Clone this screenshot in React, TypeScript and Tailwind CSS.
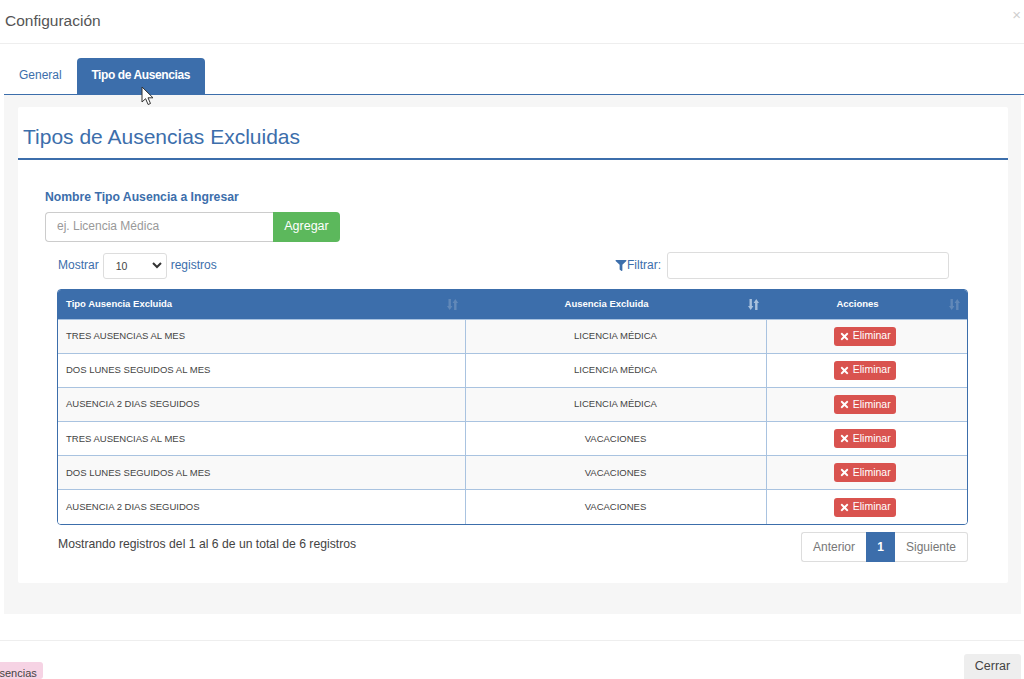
import { FaFilter, FaTimes } from 'react-icons/fa';

const rows = [
  ['TRES AUSENCIAS AL MES', 'LICENCIA MÉDICA'],
  ['DOS LUNES SEGUIDOS AL MES', 'LICENCIA MÉDICA'],
  ['AUSENCIA 2 DIAS SEGUIDOS', 'LICENCIA MÉDICA'],
  ['TRES AUSENCIAS AL MES', 'VACACIONES'],
  ['DOS LUNES SEGUIDOS AL MES', 'VACACIONES'],
  ['AUSENCIA 2 DIAS SEGUIDOS', 'VACACIONES'],
];

function SortIcon({ active }: { active?: boolean }) {
  return (
    <svg width="11" height="11" viewBox="0 0 11 11" className={active ? 'text-[#a9c1dd]' : 'text-[#6188b8]'} fill="currentColor">
      <path d="M1.5 0h2.4v7H5.4L2.7 11 0 7h1.5z" />
      <path d="M7.1 11h2.4V4H11L8.3 0 5.6 4h1.5z" />
    </svg>
  );
}

function Cursor() {
  return (
    <svg width="14" height="20" viewBox="0 0 14 20" className="absolute left-[141px] top-[86px]">
      <path d="M1 1v15l3.6-3.3 2.5 5.8 2.4-1-2.5-5.7h5z" fill="#fff" stroke="#333" strokeWidth="1" />
    </svg>
  );
}

export default function App() {
  return (
    <div className="relative w-[1024px] h-[679px] overflow-hidden bg-white font-['Liberation_Sans',Arial,sans-serif] text-[#444]">
      {/* header */}
      <div className="h-[44px] border-b border-[#eeeeee] flex items-center justify-between pl-[5px] pr-[3px]">
        <h1 className="text-[15.5px] text-[#555] -mt-[2px]">Configuración</h1>
        <span className="text-[15px] leading-none text-[#cfcfcf] -mt-[14px]">×</span>
      </div>

      {/* tabs */}
      <div className="ml-[4px] mt-[14px] h-[37px] border-b border-[#3c6eab] flex items-end pl-[15px] gap-[15px] text-[12px]">
        <span className="text-[#3c6eab] h-[36px] leading-[34px]">General</span>
        <span className="bg-[#3c6eab] text-white h-[36px] leading-[34px] w-[128px] text-center rounded-t-[4px] font-bold tracking-[-0.4px]">Tipo de Ausencias</span>
      </div>
      <Cursor />

      {/* body */}
      <div className="ml-[4px] mr-[3px] h-[519px] bg-[#f6f6f6] pt-[12px] pl-[14px] pr-[13px]">
        <div className="bg-white h-[476px] rounded-[2px] pt-[15px]">
          <h2 className="h-[38px] border-b-2 border-[#3c6eab] pl-[5px] text-[21px] leading-[30px] text-[#3c6eab]">Tipos de Ausencias Excluidas</h2>

          <div className="pl-[27px] pt-[29px]">
            <div className="text-[12.2px] leading-[16px] font-bold text-[#3c6eab]">Nombre Tipo Ausencia a Ingresar</div>
            <div className="mt-[7px] flex w-[295px] h-[30px]">
              <input
                placeholder="ej. Licencia Médica"
                className="w-[228px] border border-[#ccc] border-r-0 rounded-l-[4px] pl-[11px] pb-[2px] text-[12px] placeholder:text-[#999] outline-none"
              />
              <button className="flex-1 bg-[#5cb85c] text-white text-[12.5px] rounded-r-[4px] pb-[2px]">Agregar</button>
            </div>
          </div>

          <div className="ml-[39px] mr-[40px] mt-[9px]">
            <div className="flex items-center justify-between h-[28px] pl-[1px] pr-[19px]">
              <div className="flex items-center text-[12px] text-[#3c6eab]">
                <span>Mostrar</span>
                <div className="mx-[4px] w-[64px] h-[26px] border border-[#ddd] rounded-[3px] flex items-center justify-between pl-[12px] pr-[4px] text-[#444] text-[10.5px] mt-[1px]">
                  <span className="mt-[2px]">10</span>
                  <svg width="10" height="7" viewBox="0 0 10 7" fill="none" stroke="#333" strokeWidth="2">
                    <path d="M1 1l4 4 4-4" />
                  </svg>
                </div>
                <span>registros</span>
              </div>
              <div className="flex items-center text-[12px] text-[#3c6eab]">
                <FaFilter className="w-[12px] h-[11px]" />
                <span>Filtrar:</span>
                <div className="ml-[6px] w-[282px] h-[27px] border border-[#ddd] rounded-[3px] bg-white" />
              </div>
            </div>

            <div className="mt-[10px] w-[911px] border border-[#3c6eab] rounded-[4px] overflow-hidden">
              <table className="w-full border-collapse table-fixed text-[9.5px] text-[#444]">
                <thead>
                  <tr className="bg-[#3c6eab] text-white font-bold h-[29px]">
                    <th className="w-[407px] text-left pl-[8px] pr-[7px]">
                      <div className="flex items-center justify-between">Tipo Ausencia Excluida<SortIcon /></div>
                    </th>
                    <th className="w-[301px] pr-[7px]">
                      <div className="flex items-center justify-between"><span className="flex-1 text-center">Ausencia Excluida</span><SortIcon active /></div>
                    </th>
                    <th className="pr-[7px]">
                      <div className="flex items-center justify-between"><span className="flex-1 text-center">Acciones</span><SortIcon /></div>
                    </th>
                  </tr>
                </thead>
                <tbody>
                  {rows.map((r, i) => (
                    <tr key={i} className={`h-[34.2px] border-t border-[#a9c3e0] ${i % 2 === 0 ? 'bg-[#f9f9f9]' : 'bg-white'}`}>
                      <td className="pl-[8px]">{r[0]}</td>
                      <td className="text-center border-l border-[#a9c3e0]">{r[1]}</td>
                      <td className="border-l border-[#a9c3e0]">
                        <div className="flex justify-center pr-[4px]">
                          <button className="flex items-center gap-[3px] h-[19px] w-[62px] justify-center bg-[#d9534f] text-white rounded-[3px] text-[10.5px]">
                            <FaTimes className="w-[11px] h-[11px]" />
                            Eliminar
                          </button>
                        </div>
                      </td>
                    </tr>
                  ))}
                </tbody>
              </table>
            </div>

            <div className="flex items-start justify-between mt-[6px] w-[911px] pl-[1px]">
              <span className="text-[12.2px] leading-[26px] text-[#444]">Mostrando registros del 1 al 6 de un total de 6 registros</span>
              <div className="flex h-[30px] mt-[1px] text-[12px] text-[#777]">
                <span className="w-[65px] border border-[#ddd] border-r-0 rounded-l-[3px] flex items-center justify-center">Anterior</span>
                <span className="w-[29px] bg-[#3c6eab] text-white font-bold flex items-center justify-center">1</span>
                <span className="w-[73px] border border-[#ddd] border-l-0 rounded-r-[3px] flex items-center justify-center">Siguiente</span>
              </div>
            </div>
          </div>
        </div>
      </div>

      {/* footer */}
      <div className="mt-[26px] border-t border-[#eeeeee] h-[39px] flex items-end justify-between pr-[3px]">
        <span className="-ml-[20px] h-[17px] px-[6px] bg-[#f6d3e4] rounded-[3px] text-[11px] leading-[23px] text-[#444]">Ausencias</span>
        <button className="w-[57px] h-[25px] bg-[#eeeeee] text-[12.5px] text-[#444] rounded-t-[3px]">Cerrar</button>
      </div>
    </div>
  );
}
